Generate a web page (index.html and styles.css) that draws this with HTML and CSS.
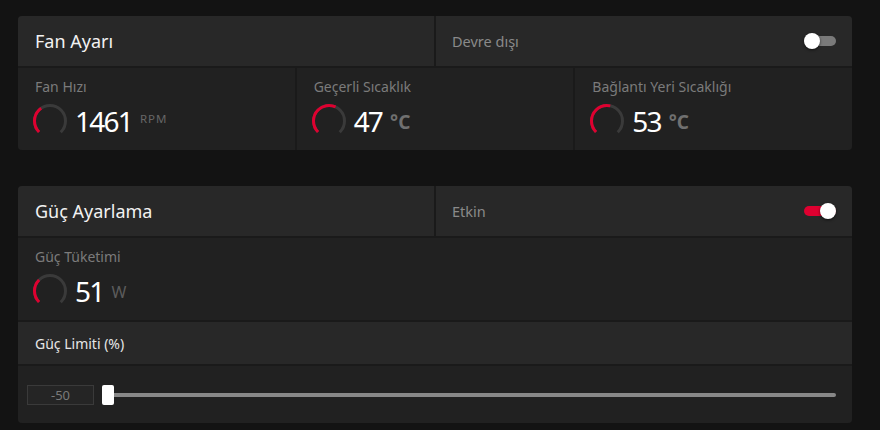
FILE: index.html
```html
<!DOCTYPE html>
<html lang="tr">
<head>
<meta charset="utf-8">
<title>Fan Ayarı</title>
<link rel="stylesheet" href="styles.css">
</head>
<body>
<main class="page">
  <section class="card">
    <div class="head">
      <div class="head-cell"><h2 class="title">Fan Ayarı</h2></div>
      <div class="head-cell status">
        <span class="status-text">Devre dışı</span>
        <span class="toggle"><span class="track"></span><span class="knob"></span></span>
      </div>
    </div>
    <div class="stats three">
      <div class="stat">
        <div class="label">Fan Hızı</div>
        <div class="reading">
          <svg class="gauge" viewBox="0 0 36 36" width="36" height="36"><circle class="g-track" cx="18" cy="18" r="15.5" transform="rotate(135 18 18)"/><circle class="g-fill" cx="18" cy="18" r="15.5" transform="rotate(135 18 18)" style="stroke-dasharray:27 100"/></svg>
          <span class="num">1461</span><span class="unit small">RPM</span>
        </div>
      </div>
      <div class="stat">
        <div class="label">Geçerli Sıcaklık</div>
        <div class="reading">
          <svg class="gauge" viewBox="0 0 36 36" width="36" height="36"><circle class="g-track" cx="18" cy="18" r="15.5" transform="rotate(135 18 18)"/><circle class="g-fill" cx="18" cy="18" r="15.5" transform="rotate(135 18 18)" style="stroke-dasharray:43 100"/></svg>
          <span class="num">47</span><span class="unit deg">°C</span>
        </div>
      </div>
      <div class="stat">
        <div class="label">Bağlantı Yeri Sıcaklığı</div>
        <div class="reading">
          <svg class="gauge" viewBox="0 0 36 36" width="36" height="36"><circle class="g-track" cx="18" cy="18" r="15.5" transform="rotate(135 18 18)"/><circle class="g-fill" cx="18" cy="18" r="15.5" transform="rotate(135 18 18)" style="stroke-dasharray:39.5 100"/></svg>
          <span class="num">53</span><span class="unit deg">°C</span>
        </div>
      </div>
    </div>
  </section>

  <section class="card">
    <div class="head">
      <div class="head-cell"><h2 class="title">Güç Ayarlama</h2></div>
      <div class="head-cell status">
        <span class="status-text">Etkin</span>
        <span class="toggle on"><span class="track"></span><span class="knob"></span></span>
      </div>
    </div>
    <div class="stats one">
      <div class="stat">
        <div class="label">Güç Tüketimi</div>
        <div class="reading">
          <svg class="gauge" viewBox="0 0 36 36" width="36" height="36"><circle class="g-track" cx="18" cy="18" r="15.5" transform="rotate(135 18 18)"/><circle class="g-fill" cx="18" cy="18" r="15.5" transform="rotate(135 18 18)" style="stroke-dasharray:24.3 100"/></svg>
          <span class="num">51</span><span class="unit watt">W</span>
        </div>
      </div>
    </div>
    <div class="sub-head">Güç Limiti (%)</div>
    <div class="slider-body">
      <div class="value-box">-50</div>
      <div class="range"><span class="thumb"></span><span class="rail"></span></div>
    </div>
  </section>
</main>
</body>
</html>
```

FILE: styles.css
```css
* { box-sizing: border-box; }
html, body { margin: 0; padding: 0; }
body {
  background: #131313;
  font-family: "Noto Sans", "DejaVu Sans", sans-serif;
  width: 880px;
  height: 430px;
  overflow: hidden;
}
.page {
  padding: 16px 0 0 18px;
  display: flex;
  flex-direction: column;
  gap: 36px;
}
.card {
  width: 834px;
  background: #1a1a1a;
  border-radius: 4px;
  overflow: hidden;
  display: grid;
  gap: 2px;
}
.head {
  display: grid;
  grid-template-columns: 1fr 1fr;
  gap: 2px;
  height: 50px;
}
.head-cell {
  background: #282828;
  display: flex;
  align-items: center;
  padding: 0 16px 0 17px;
}
.title {
  margin: 0;
  font-size: 18px;
  font-weight: 400;
  color: #f2f2f2;
}
.status { justify-content: space-between; padding-left: 16px; }
.status-text {
  font-size: 14.5px;
  color: #8a8a8a;
}
.toggle {
  position: relative;
  width: 32px;
  height: 16px;
  display: inline-block;
}
.track {
  position: absolute;
  left: 0;
  right: 0;
  top: 3px;
  height: 10px;
  border-radius: 5px;
  background: #7a7a7a;
}
.knob {
  position: absolute;
  top: 0;
  left: 0;
  width: 16px;
  height: 16px;
  border-radius: 50%;
  background: #fff;
  box-shadow: 0 1px 3px rgba(0, 0, 0, 0.6);
}
.toggle.on .track { background: #df0030; }
.toggle.on .knob { left: 16px; }

.stats {
  display: grid;
  gap: 2px;
}
.stats.three { grid-template-columns: 1fr 1fr 1fr; }
.stats.one { grid-template-columns: 1fr; }
.stat {
  background: #212121;
  height: 82px;
  padding: 9px 16px 0 17px;
}
.label {
  font-size: 14px;
  line-height: 19px;
  color: #7b7b7b;
}
.reading {
  display: flex;
  align-items: center;
  margin-top: 7px;
  height: 36px;
}
.gauge {
  display: block;
  margin-left: -3px;
  margin-right: 7px;
  flex: none;
}
.gauge circle {
  fill: none;
  stroke-width: 3;
}
.g-track { stroke: #3a3a3a; stroke-dasharray: 73 100; }
.g-fill { stroke: #df0030; }
.num {
  font-family: "Noto Sans", sans-serif;
  font-size: 28px;
  letter-spacing: -1.8px;
  color: #ffffff;
  line-height: 36px;
}
.unit { color: #6f6f6f; }
.unit.small {
  font-size: 11.5px;
  letter-spacing: 1px;
  align-self: flex-start;
  margin-top: 8px;
  margin-left: 8px;
  color: #666;
}
.unit.deg {
  font-size: 19px;
  font-weight: 700;
  margin-left: 8px;
  margin-top: 2px;
  color: #707070;
}
.unit.watt {
  font-size: 16px;
  margin-left: 8px;
  margin-top: 2px;
  color: #5c5c5c;
}
.sub-head {
  background: #282828;
  height: 42px;
  display: flex;
  align-items: center;
  padding-left: 17px;
  font-size: 14px;
  color: #e6e6e6;
}
.slider-body {
  background: #212121;
  height: 57px;
  display: flex;
  align-items: center;
  gap: 8px;
  padding: 0 16px 0 9px;
}
.value-box {
  width: 67px;
  height: 20px;
  border: 1px solid #3a3a3a;
  background: #252525;
  color: #7a7a7a;
  font-size: 13px;
  line-height: 18px;
  text-align: center;
}
.range {
  flex: 1;
  display: flex;
  align-items: center;
}
.thumb {
  width: 12px;
  height: 20px;
  background: #fff;
  border-radius: 2px;
  flex: none;
}
.rail {
  flex: 1;
  height: 4px;
  background: #888;
  border-radius: 0 2px 2px 0;
}
```
